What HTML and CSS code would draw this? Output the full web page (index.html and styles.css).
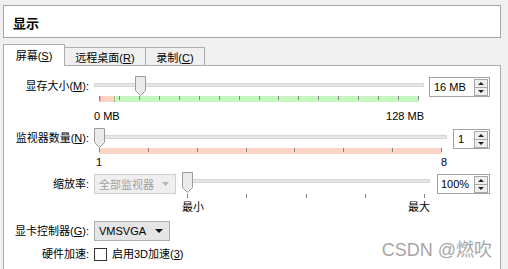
FILE: index.html
```html
<!DOCTYPE html>
<html lang="zh-CN">
<head>
  <meta charset="UTF-8">
  <title>显示</title>
  <link rel="stylesheet" href="styles.css">
</head>
<body>
  <div class="header">显示</div>

  <div class="tabs">
    <div class="tab active">屏幕(<u>S</u>)</div>
    <div class="tab">远程桌面(<u>R</u>)</div>
    <div class="tab">录制(<u>C</u>)</div>
  </div>

  <div class="panel">
    <!-- 显存大小 -->
    <div class="row row-mem">
      <label class="lbl">显存大小(<u>M</u>):</label>
      <div class="slider">
        <div class="slider-line">
          <div class="track"></div>
          <svg class="thumb" style="left:41px" width="11" height="20" viewBox="0 0 11 20"><path d="M0.5 0.5h10v14l-5 5l-5-5z" fill="#ebebeb" stroke="#9c9c9c"/></svg>
        </div>
        <div class="scale scale-mem">
          <i></i><i></i><i></i><i></i><i></i><i></i><i></i><i></i><i></i>
          <i></i><i></i><i></i><i></i><i></i><i></i><i></i><i></i>
        </div>
        <div class="ends ends-mem"><span>0 MB</span><span>128 MB</span></div>
      </div>
      <div class="spin spin-mem">
        <span>16 MB</span>
        <svg class="spin-btn" width="14" height="17" viewBox="0 0 14 17"><rect x="0.5" y="0.5" width="13" height="16" fill="#efefef" stroke="#a8a8a8"/><line x1="1" y1="8.5" x2="13" y2="8.5" stroke="#a8a8a8"/><path d="M4 6h6l-3-3z" fill="#222"/><path d="M4 11h6l-3 3z" fill="#222"/></svg>
      </div>
    </div>

    <!-- 监视器数量 -->
    <div class="row row-mon">
      <label class="lbl">监视器数量(<u>N</u>):</label>
      <div class="slider">
        <div class="slider-line">
          <div class="track"></div>
          <svg class="thumb" style="left:0" width="11" height="20" viewBox="0 0 11 20"><path d="M0.5 0.5h10v14l-5 5l-5-5z" fill="#ebebeb" stroke="#9c9c9c"/></svg>
        </div>
        <div class="scale scale-mon">
          <i></i><i></i><i></i><i></i><i></i><i></i><i></i><i></i>
        </div>
        <div class="ends ends-mon"><span>1</span><span>8</span></div>
      </div>
      <div class="spin spin-mon">
        <span>1</span>
        <svg class="spin-btn" width="14" height="17" viewBox="0 0 14 17"><rect x="0.5" y="0.5" width="13" height="16" fill="#efefef" stroke="#a8a8a8"/><line x1="1" y1="8.5" x2="13" y2="8.5" stroke="#a8a8a8"/><path d="M4 6h6l-3-3z" fill="#222"/><path d="M4 11h6l-3 3z" fill="#222"/></svg>
      </div>
    </div>

    <!-- 缩放率 -->
    <div class="row row-scale">
      <label class="lbl">缩放率:</label>
      <div class="combo combo-disabled">
        <span>全部监视器</span>
        <svg width="7" height="4" viewBox="0 0 7 4"><path d="M0 0h7l-3.5 4z" fill="#b4b4b4"/></svg>
      </div>
      <div class="slider">
        <div class="slider-line">
          <div class="track"></div>
          <svg class="thumb" style="left:0" width="11" height="21" viewBox="0 0 11 21"><path d="M0.5 0.5h10v15l-5 5l-5-5z" fill="#ebebeb" stroke="#9c9c9c"/></svg>
        </div>
        <div class="ticks">
          <i></i><i></i><i></i><i></i><i></i>
        </div>
        <div class="ends ends-scale"><span>最小</span><span>最大</span></div>
      </div>
      <div class="spin spin-scale">
        <span>100%</span>
        <svg class="spin-btn" width="14" height="17" viewBox="0 0 14 17"><rect x="0.5" y="0.5" width="13" height="16" fill="#efefef" stroke="#a8a8a8"/><line x1="1" y1="8.5" x2="13" y2="8.5" stroke="#a8a8a8"/><path d="M4 6h6l-3-3z" fill="#222"/><path d="M4 11h6l-3 3z" fill="#222"/></svg>
      </div>
    </div>

    <!-- 显卡控制器 -->
    <div class="row row-ctrl">
      <label class="lbl">显卡控制器(<u>G</u>):</label>
      <div class="combo combo-ctrl">
        <span>VMSVGA</span>
        <svg width="8" height="4" viewBox="0 0 8 4"><path d="M0 0h8l-4 4z" fill="#111"/></svg>
      </div>
    </div>

    <!-- 硬件加速 -->
    <div class="row row-accel">
      <label class="lbl">硬件加速:</label>
      <span class="checkbox"></span>
      <span class="check-text">启用3D加速(<u>3</u>)</span>
    </div>
  </div>

  <div class="watermark">CSDN @燃吹</div>
</body>
</html>
```

FILE: styles.css
```css
* { box-sizing: border-box; margin: 0; padding: 0; }
body {
  font-family: 'Liberation Sans', 'Noto Sans CJK SC', sans-serif;
  font-size: 11px;
  color: #000;
  background: #f0f0f0;
  width: 508px;
  height: 269px;
  overflow: hidden;
  position: relative;
}
u { text-decoration: underline; text-underline-offset: 1px; }

.header {
  margin: 5px 7px 0 3px;
  height: 33px;
  background: #fff;
  border: 1px solid #a5a5a5;
  display: flex;
  align-items: center;
  padding: 2px 0 0 9px;
  font-size: 13px;
  font-weight: 700;
}

.tabs {
  display: flex;
  align-items: flex-end;
  margin: 6px 0 0 3px;
  height: 21px;
}
.tab {
  height: 18px;
  border: 1px solid #adadad;
  border-bottom: none;
  margin-left: -1px;
  display: flex;
  align-items: center;
  justify-content: center;
  padding-top: 3px;
  line-height: 14px;
}
.tab:nth-child(2) { width: 82px; }
.tab:nth-child(3) { width: 60px; }
.tab.active {
  margin-left: 0;
  width: 62px;
  height: 22px;
  margin-bottom: -1px;
  padding-top: 0;
  background: #fff;
  position: relative;
  z-index: 1;
}

/* panel runs off the bottom of the window, so no bottom edge */
.panel {
  margin: 0 7px 0 3px;
  height: 204px;
  background: #fff;
  border: 1px solid #adadad;
  border-bottom: none;
  padding: 10px 10px 0 0;
}

.row {
  display: flex;
  align-items: flex-start;
}
.lbl {
  flex: none;
  width: 85px;
  margin-right: 5px;
  text-align: right;
  line-height: 20px;
  white-space: nowrap;
}

.slider { flex: 1; min-width: 0; }
.slider-line {
  position: relative;
  height: 20px;
}
.track {
  position: absolute;
  left: 0;
  right: 0;
  top: 7px;
  height: 4px;
  background: #e6e6e6;
  border: 1px solid #d6d6d6;
}
.thumb {
  position: absolute;
  top: 0;
  display: block;
}

.scale {
  margin: 0 5px;
  height: 6px;
  display: flex;
  justify-content: space-between;
  align-items: flex-start;
}
.scale i, .ticks i {
  display: block;
  width: 1px;
  height: 4px;
  background: #858585;
}
.scale-mem {
  background: linear-gradient(to right, #f2aaa0 0 2px, #fdd3c3 2px 15px, #a9b98e 15px 16px, #c6f6c0 16px);
}
.scale-mon { background: #fdd5c4; }

.ticks {
  margin: 2px 5px 0;
  height: 4px;
  display: flex;
  justify-content: space-between;
}

.ends {
  display: flex;
  justify-content: space-between;
  line-height: 14px;
}
.ends-mem { margin-top: 7px; }
.ends-mon { margin: 1px 0 0 2px; }
.ends-scale { margin-top: 2px; }

.spin {
  flex: none;
  height: 20px;
  margin-top: 1px;
  border: 1px solid #a3a3a3;
  background: #fff;
  display: flex;
  align-items: center;
  justify-content: space-between;
  padding: 0 1px 0 4px;
}
.spin-btn { display: block; }
.spin-mem { width: 61px; margin-left: 5px; }
.spin-mon { width: 37px; margin-left: 6px; }
.spin-scale { width: 53px; margin-left: 7px; margin-top: 2px; padding-left: 3px; }

.combo {
  flex: none;
  height: 20px;
  display: flex;
  align-items: center;
  justify-content: space-between;
  padding: 0 6px 0 4px;
}
.combo-disabled {
  width: 82px;
  margin: 2px 6px 0 0;
  background: #efefef;
  border: 1px solid #cfcfcf;
  color: #a2a2a2;
}
.combo-ctrl {
  width: 76px;
  background: #e5e5e5;
  border: 1px solid #adadad;
}

.row-mon { margin-top: 5px; }
.row-scale { margin-top: 3px; }
.row-scale .lbl { margin-top: 2px; }
.row-ctrl { margin-top: 7px; }
.row-accel { margin-top: 7px; align-items: center; }
.row-accel .lbl { line-height: 13px; }

.checkbox {
  width: 13px;
  height: 13px;
  border: 1px solid #333;
  background: #fff;
}
.check-text {
  margin-left: 5px;
  line-height: 13px;
}

.watermark {
  position: absolute;
  right: 16px;
  top: 240px;
  font-size: 18px;
  color: #a6a6a6;
  line-height: 21px;
}
```
